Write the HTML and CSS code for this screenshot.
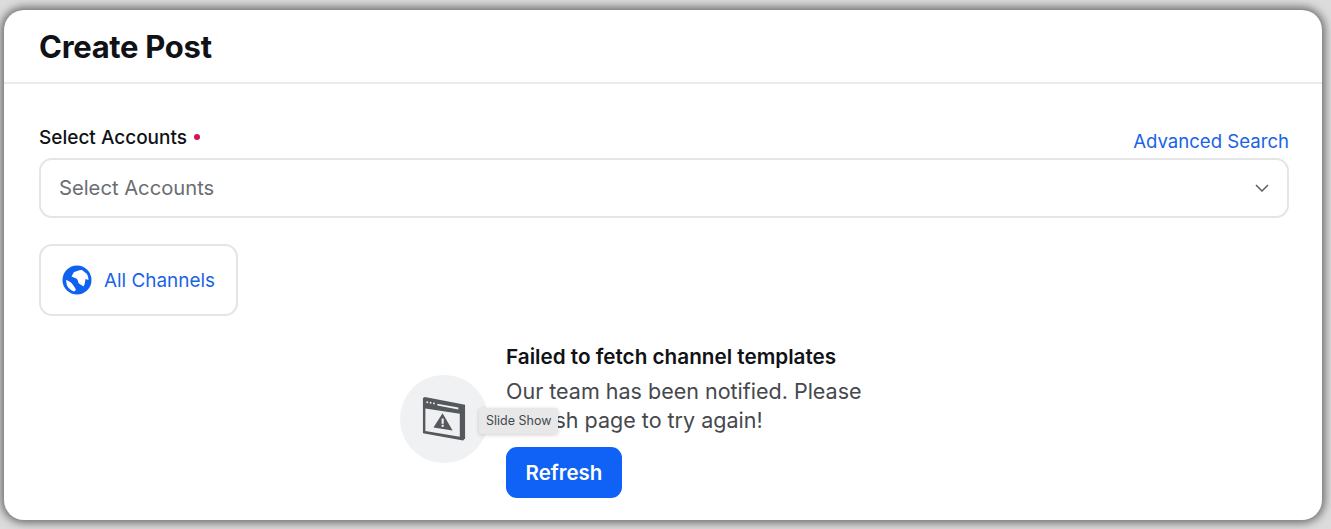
FILE: index.html
```html
<!DOCTYPE html>
<html lang="en">
<head>
    <meta charset="UTF-8" />
    <title>Create Post</title>
    <link rel="stylesheet" href="styles.css">
</head>
<body>
<div class="modal">
    <header class="modal-header">
        <h1>Create Post</h1>
    </header>

    <main class="modal-body">
        <div class="field-head">
            <label class="field-label">Select Accounts <span class="required"></span></label>
            <a class="link" href="#">Advanced Search</a>
        </div>
        <div class="select">
            <span class="select-text">Select Accounts</span>
            <svg class="chevron" width="14" height="8" viewBox="0 0 14 8"><path d="M1 1l6 6 6-6" fill="none" stroke="#5c5f66" stroke-width="1.5"/></svg>
        </div>

        <button class="channel-btn">
            <svg width="30" height="30" viewBox="0 0 30 30">
                <circle cx="15" cy="15" r="14.500" fill="#0f62f0"/>
                <path d="M12 7C15 6 18 4.500 20 5L25 9C26 11 26.500 13 26.500 15L23.500 14C23 17 23 19 21.500 21.500C19.500 20 18 19.500 16.500 18C16 15 15 13.500 13 13L9.500 11.500Z" fill="#fff"/>
                <path d="M4 15C6 15.500 8 16.500 9.500 18C11 20 13 22 14 25L12 26.500C9 25.500 6 23 4.800 20Z" fill="#fff"/>
            </svg>
            <span class="channel-name">All Channels</span>
        </button>

        <section class="empty-state">
            <div class="empty-icon">
                <svg width="46" height="44" viewBox="0 0 48 46">
                    <path d="M2 1l2-1 42 8v35l-2 2.500L2 38z" fill="#55585c"/>
                    <path d="M4.500 12l36 5.500v24l-36-6z" fill="#eef0f1"/>
                    <path d="M22.500 17l10.500 18-20-3z" fill="#55585c"/>
                    <rect x="21.500" y="22.500" width="2.200" height="5.500" fill="#eef0f1"/>
                    <rect x="21.500" y="29" width="2.200" height="2.200" fill="#eef0f1"/>
                    <path d="M17 7l22 4v2l-22-4z" fill="#eef0f1"/>
                    <circle cx="6.500" cy="5.500" r="1" fill="#eef0f1"/>
                    <circle cx="10" cy="6" r="1" fill="#eef0f1"/>
                    <circle cx="13.500" cy="6.700" r="1" fill="#eef0f1"/>
                </svg>
            </div>
            <div class="empty-text">
                <h2>Failed to fetch channel templates</h2>
                <p>Our team has been notified. Please refresh page to try again!</p>
                <button class="refresh-btn">Refresh</button>
            </div>
            <div class="tooltip">Slide Show</div>
        </section>
    </main>
</div>
</body>
</html>
```

FILE: styles.css
```css
* {
    box-sizing: border-box;
}

html, body {
    height: 100%;
}

body {
    margin: 0;
    padding: 10px 9px 9px 4px;
    overflow: hidden;
    background-color: #dcdcdc;
    font-family: Inter, "Liberation Sans", sans-serif;
    color: #101216;
}

.modal {
    height: 100%;
    background-color: #fff;
    border-radius: 20px;
    box-shadow: 0 0 9px 3px rgba(0, 0, 0, 0.5);
}

.modal-header {
    height: 74px;
    padding: 18px 35px 0;
    border-bottom: 2px solid #e9ebec;
}

.modal-header h1 {
    margin: 0;
    font-size: 31px;
    line-height: 38px;
    font-weight: 700;
    letter-spacing: -0.3px;
}

.modal-body {
    padding: 0 33px 0 35px;
}

.field-head {
    display: flex;
    justify-content: space-between;
    align-items: flex-end;
    height: 74px;
    padding-bottom: 5px;
}

.field-label {
    font-size: 19px;
    line-height: 24px;
    font-weight: 500;
    margin-bottom: 3px;
}

.required {
    display: inline-block;
    width: 6px;
    height: 6px;
    margin: 0 0 4px 2px;
    border-radius: 50%;
    background-color: #d6125a;
}

.link {
    font-size: 18.600px;
    line-height: 24px;
    color: #1a63e6;
    text-decoration: none;
}

.select {
    display: flex;
    justify-content: space-between;
    align-items: center;
    height: 60px;
    padding: 0 18px;
    border: 2px solid #e3e5e6;
    border-radius: 13px;
    font-size: 20.200px;
    color: #6a6d72;
}

.select-text {
    margin-bottom: 2px;
}

.channel-btn {
    display: flex;
    align-items: center;
    gap: 12px;
    width: 199px;
    height: 72px;
    margin-top: 26px;
    padding: 0 21px;
    background-color: #fff;
    border: 2px solid #e3e5e6;
    border-radius: 13px;
    font-family: inherit;
    font-size: 18.900px;
    color: #1a63e6;
}

.channel-name {
    margin-top: 1px;
}

.empty-state {
    position: relative;
    display: flex;
    align-items: center;
    gap: 18px;
    width: 480px;
    margin: 27px 0 0 361px;
}

.empty-icon {
    display: flex;
    align-items: center;
    justify-content: center;
    flex: none;
    width: 88px;
    height: 88px;
    margin-bottom: 3px;
    border-radius: 50%;
    background-color: #eff1f2;
}

.empty-text h2 {
    margin: 0;
    font-size: 20.700px;
    line-height: 28px;
    font-weight: 600;
}

.empty-text p {
    margin: 6px 0 12px;
    width: 370px;
    font-size: 21.500px;
    line-height: 29px;
    color: #45484d;
}

.refresh-btn {
    display: block;
    width: 116px;
    height: 51px;
    background-color: #0f62f5;
    border: none;
    border-radius: 11px;
    font-family: inherit;
    font-size: 20.500px;
    font-weight: 600;
    color: #fff;
}

.tooltip {
    position: absolute;
    left: 79px;
    top: 65px;
    padding: 5px 7px;
    background-color: #e8e8e8;
    border-radius: 3px;
    box-shadow: 0 1px 4px rgba(0, 0, 0, 0.18);
    font-size: 12.500px;
    line-height: 16px;
    color: #45484d;
}
```
